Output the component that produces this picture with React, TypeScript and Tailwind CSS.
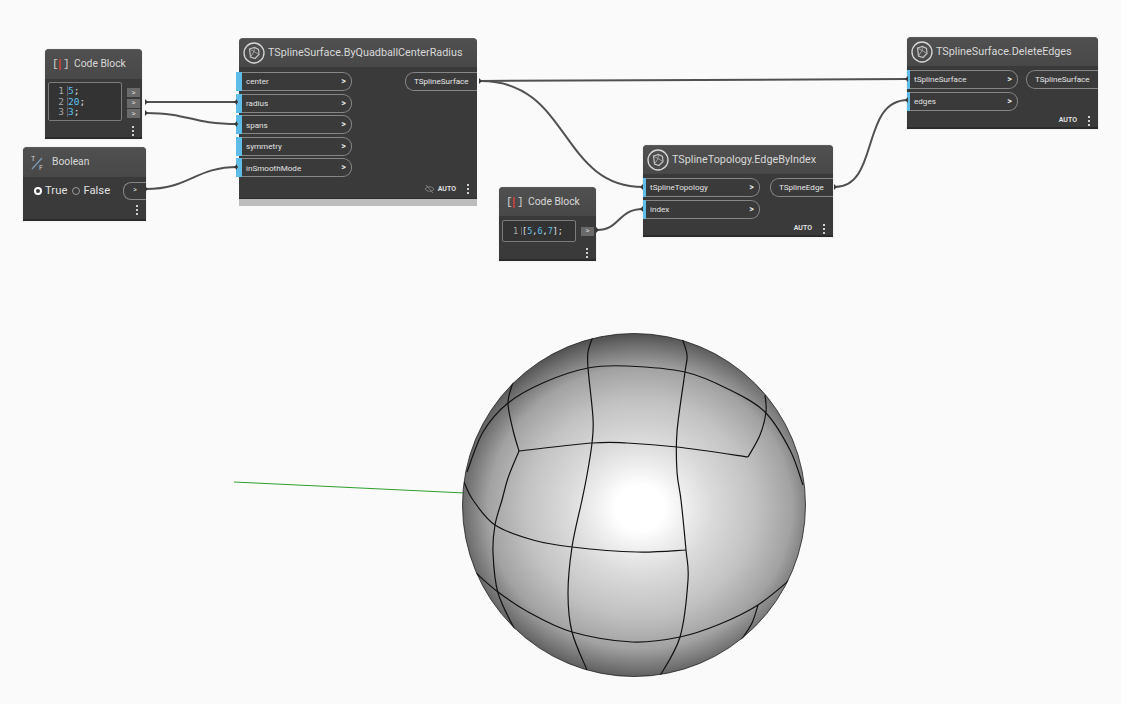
import React from "react";

const FONT = "font-['Roboto','Noto_Sans',sans-serif]";

function smooth(pts: number[][], t = 0.5): string {
  let d = `M${pts[0][0]} ${pts[0][1]}`;
  for (let i = 0; i < pts.length - 1; i++) {
    const p0 = pts[Math.max(0, i - 1)], p1 = pts[i], p2 = pts[i + 1], p3 = pts[Math.min(pts.length - 1, i + 2)];
    const c1x = p1[0] + ((p2[0] - p0[0]) * t) / 3, c1y = p1[1] + ((p2[1] - p0[1]) * t) / 3;
    const c2x = p2[0] - ((p3[0] - p1[0]) * t) / 3, c2y = p2[1] - ((p3[1] - p1[1]) * t) / 3;
    d += ` C${c1x.toFixed(1)} ${c1y.toFixed(1)} ${c2x.toFixed(1)} ${c2y.toFixed(1)} ${p2[0]} ${p2[1]}`;
  }
  return d;
}

const curves: number[][][] = [
  [[467,472],[483,432],[508,403],[545,382],[588,368],[627,366],[685,372],[728,389],[765,412],[790,450],[803,485]],
  [[519,451],[592,443],[627,443],[677,447],[748,457]],
  [[748,457],[760,435],[766,412],[765,395]],
  [[519,451],[513,430],[508,403],[513,382]],
  [[519,451],[508,478],[502,500],[495,525],[493,553],[498,593],[516,632]],
  [[593,336],[588,352],[588,368],[593,418],[592,443],[587,475],[582,500],[572,547],[568,593],[572,632],[587,670]],
  [[682,338],[687,355],[685,372],[677,432],[677,472],[681,500],[686,550],[688,580],[680,637],[660,676]],
  [[464,482],[473,500],[495,525],[533,540],[572,547],[637,552],[686,550]],
  [[476,573],[498,592],[530,613],[572,632],[632,642],[680,637],[720,624],[758,605],[792,578]],
  [[758,605],[752,623],[740,642]],
];

function Sphere() {
  return (
    <svg className="absolute left-0 top-0" width="1121" height="704" viewBox="0 0 1121 704" fill="none">
      <defs>
        <radialGradient id="ball" gradientUnits="userSpaceOnUse" cx="0" cy="0" r="1" gradientTransform="translate(640 508) scale(192 178)">
          <stop offset="0" stopColor="#ffffff" />
          <stop offset="0.13" stopColor="#ffffff" />
          <stop offset="0.24" stopColor="#eeeeee" />
          <stop offset="0.38" stopColor="#dadada" />
          <stop offset="0.6" stopColor="#c2c2c2" />
          <stop offset="0.79" stopColor="#a2a2a2" />
          <stop offset="0.92" stopColor="#6c6c6c" />
          <stop offset="1" stopColor="#484848" />
        </radialGradient>
        <clipPath id="ballClip">
          <circle cx="634" cy="505" r="172" />
        </clipPath>
      </defs>
      <path d="M234 482 L465 493" stroke="#2f9e2f" strokeWidth="1" />
      <circle cx="634" cy="505" r="171.5" fill="url(#ball)" stroke="#222" strokeWidth="0.8" />
      <g clipPath="url(#ballClip)">
        {curves.map((c, i) => (
          <path key={i} d={smooth(c)} stroke="#111" strokeWidth="1.2" />
        ))}
      </g>
    </svg>
  );
}

function Wires() {
  const w = "#505050";
  const paths = [
    "M146 102 L238 102",
    "M146 113 C190 113 190 124 238 124",
    "M146 189 C190 189 195 167 238 167",
    "M481 81 L908 79",
    "M481 81 C570 81 560 187 643 187",
    "M597 230 C620 230 618 209 643 209",
    "M835 187 C880 187 860 100 908 100",
  ];
  const nubs = [[146,102],[146,113],[146,189],[480,81],[597,230],[835,187]];
  const inNubs = [[236,102],[236,124],[236,167],[642,187],[642,209],[907,79],[907,100]];
  return (
    <svg className="absolute left-0 top-0 z-20 pointer-events-none" width="1121" height="704" viewBox="0 0 1121 704" fill="none">
      {paths.map((d, i) => (
        <path key={i} d={d} stroke={w} strokeWidth="2" />
      ))}
      {nubs.map(([x, y], i) => (
        <path key={i} d={`M${x - 1} ${y - 3} L${x + 2} ${y} L${x - 1} ${y + 3} Z`} fill="#3a3a3a" />
      ))}
      {inNubs.map(([x, y], i) => (
        <path key={i} d={`M${x + 1} ${y - 3} L${x - 2} ${y} L${x + 1} ${y + 3} Z`} fill="#3a3a3a" />
      ))}
    </svg>
  );
}

function NodeIcon() {
  return (
    <svg width="22" height="22" viewBox="0 0 22 22" fill="none" className="shrink-0">
      <circle cx="11" cy="11" r="10" stroke="#d8d8d8" strokeWidth="1.3" />
      <path d="M6.5 7 L11.5 5.5 L15.5 7.5 L16 12.5 L12 16.5 L7.5 15 Z" stroke="#c4c4c4" strokeWidth="1.2" />
      <path d="M6.5 7 L11 9.5 L11.5 5.5 M11 9.5 L16 12.5 M11 9.5 L7.5 15" stroke="#a8a8a8" strokeWidth="0.9" />
    </svg>
  );
}

function CodeIcon() {
  return (
    <span className="flex w-[15px] items-center justify-between font-['Liberation_Mono',monospace] text-[11px] leading-none text-[#cfcfcf]">
      <span className="w-[4px] shrink-0">[</span>
      <span className="h-[11px] w-[2px] shrink-0 bg-[#b5423f]" />
      <span className="w-[4px] shrink-0 text-right">]</span>
    </span>
  );
}

function BoolIcon() {
  return (
    <svg width="14" height="16" viewBox="0 0 14 16" fill="none">
      <path d="M1 14 L11 3" stroke="#7c9ab8" strokeWidth="1.2" />
      <text x="0" y="6" fontSize="7" fill="#cfcfcf" fontFamily="Roboto, sans-serif">T</text>
      <text x="8" y="15" fontSize="7" fill="#cfcfcf" fontFamily="Roboto, sans-serif">F</text>
    </svg>
  );
}

function Dots({ className = "" }: { className?: string }) {
  return (
    <span className={"flex h-[10px] w-[2px] flex-col justify-between " + className}>
      <span className="h-[2px] w-[2px] bg-[#d0d0d0]" />
      <span className="h-[2px] w-[2px] bg-[#d0d0d0]" />
      <span className="h-[2px] w-[2px] bg-[#d0d0d0]" />
    </span>
  );
}

function Auto({ hidden }: { hidden?: boolean }) {
  return (
    <div className="flex h-[14px] items-center justify-end pr-[8px]">
      {hidden && (
        <svg width="11" height="10" viewBox="0 0 11 10" fill="none" className="mr-[3px]">
          <path d="M1 5 C3 2 8 2 10 5 C8 8 3 8 1 5 Z M2 1 L9 9" stroke="#8a8a8a" strokeWidth="0.8" />
        </svg>
      )}
      <span className="mr-[11px] text-[7px] font-semibold leading-none text-[#e4e4e4]">AUTO</span>
      <Dots />
    </div>
  );
}

function InPort({ name, wide }: { name: string; wide?: boolean }) {
  return (
    <div className={"relative flex h-[19px] items-center rounded-r-[9px] border border-l-0 border-[#868686] pr-[5px] " + (wide ? "ml-[2px] pl-[5px]" : "pl-[7px]")}>
      <span className={"absolute top-[-1px] h-[19px] bg-[#5dbde6] " + (wide ? "left-[-5px] w-[6px]" : "left-0 w-[3px]")} />
      <span className="flex-1 text-[8.1px] leading-none text-[#e2e2e2]">{name}</span>
      <span className="text-[9px] font-semibold leading-none text-[#e8e8e8]">&gt;</span>
    </div>
  );
}

function OutPort({ name }: { name: string }) {
  return (
    <div className="flex h-[19px] items-center rounded-l-[9px] border border-r-0 border-[#868686] pl-[8px]">
      <span className="text-[8.1px] leading-none text-[#e8e8e8]">{name}</span>
    </div>
  );
}

function Header({ title, icon, h, gap, pad, small }: { title: string; icon: React.ReactNode; h: string; gap: string; pad: string; small?: boolean }) {
  return (
    <div className={`flex items-center rounded-t-[4px] bg-gradient-to-b from-[#505050] to-[#484848] ${h} ${gap} ${pad}`}>
      {icon}
      <span className={"whitespace-nowrap leading-none text-[#d8d8d8] " + (small ? "text-[10.3px]" : "text-[10.8px]")}>{title}</span>
    </div>
  );
}

function CodeLine({ n, children, small }: { n: number; children: React.ReactNode; small?: boolean }) {
  return (
    <div className={"flex h-[10.5px] items-center font-['DejaVu_Sans_Mono','Liberation_Mono',monospace] leading-none " + (small ? "text-[8.5px]" : "text-[9.5px]")}>
      <span className="w-[18px] pr-[3px] text-right text-[#a8a8a8]">{n}</span>
      <span className="border-l border-[#666] text-[#e0e0e0]">{children}</span>
    </div>
  );
}

const B = ({ children }: { children: React.ReactNode }) => <span className="text-[#5cc0ee]">{children}</span>;

function OutChip() {
  return (
    <span className="flex h-[9px] w-[13px] items-center justify-center bg-[#6a6a6a] text-[8px] leading-none text-[#dcdcdc]">&gt;</span>
  );
}

const nodeBase = "absolute z-10 bg-[#3a3a3a] border-t border-[#5c5c5c] border-b-2 border-b-[#2b2b2b] rounded-t-[4px] shadow-[0_0_1px_rgba(0,0,0,0.35)]";

export default function App() {
  return (
    <div className={`relative h-[704px] w-[1121px] overflow-hidden bg-[#fafafa] ${FONT}`}>
      <Sphere />
      <Wires />

      {/* Code Block 1 */}
      <div className={`${nodeBase} left-[45px] top-[49px] h-[90px] w-[97px]`}>
        <Header small title="Code Block" icon={<CodeIcon />} h="h-[29px]" gap="gap-[7px]" pad="pl-[7px]" />
        <div className="flex pl-[3px] pt-[3px]">
          <div className="flex h-[39px] w-[74px] flex-col justify-center rounded-[2px] border border-[#7c7c7c] bg-[#333333]">
            <CodeLine n={1}><B>5</B>;</CodeLine>
            <CodeLine n={2}><B>20</B>;</CodeLine>
            <CodeLine n={3}><B>3</B>;</CodeLine>
          </div>
          <div className="ml-[5px] flex flex-col gap-[1.5px] pt-[6px]">
            <OutChip />
            <OutChip />
            <OutChip />
          </div>
        </div>
        <div className="flex justify-end pr-[8px] pt-[5px]"><Dots /></div>
      </div>

      {/* Boolean */}
      <div className={`${nodeBase} left-[23px] top-[147px] h-[74px] w-[123px]`}>
        <Header small title="Boolean" icon={<BoolIcon />} h="h-[29px]" gap="gap-[7px]" pad="pl-[8px]" />
        <div className="flex items-center pl-[11px] pt-[4px]">
          <span className="h-[8px] w-[8px] rounded-full border-[2.5px] border-white" />
          <span className="ml-[3px] text-[11.3px] leading-[19px] text-[#e0e0e0]">True</span>
          <span className="ml-[5px] h-[8px] w-[8px] rounded-full border border-[#999]" />
          <span className="ml-[3px] text-[11.3px] leading-[19px] text-[#e0e0e0]">False</span>
          <div className="ml-auto flex h-[18px] w-[23px] items-center justify-center rounded-l-[8px] border border-r-0 border-[#868686] text-[7px] text-[#e0e0e0]">&gt;</div>
        </div>
        <div className="flex justify-end pr-[8px] pt-[5px]"><Dots /></div>
      </div>

      {/* ByQuadballCenterRadius */}
      <div className="absolute left-[239px] top-[38px] z-10 w-[238px]">
        <div className="rounded-t-[4px] border-t border-[#5c5c5c] bg-[#3a3a3a]">
          <Header title="TSplineSurface.ByQuadballCenterRadius" icon={<NodeIcon />} h="h-[28px]" gap="gap-[3px]" pad="pl-[4px]" />
          <div className="flex justify-between pt-[5px]">
            <div className="flex w-[113px] flex-col gap-[2.6px]">
              <InPort wide name="center" />
              <InPort wide name="radius" />
              <InPort wide name="spans" />
              <InPort wide name="symmetry" />
              <InPort wide name="inSmoothMode" />
            </div>
            <div className="w-[72px]"><OutPort name="TSplineSurface" /></div>
          </div>
          <div className="pb-[2px] pt-[5px]"><Auto hidden /></div>
        </div>
        <div className="h-[8px] border-t border-[#2b2b2b] bg-[#bdbdbd]" />
      </div>

      {/* Code Block 2 */}
      <div className={`${nodeBase} left-[499px] top-[187px] h-[74px] w-[97px]`}>
        <Header small title="Code Block" icon={<CodeIcon />} h="h-[28px]" gap="gap-[7px]" pad="pl-[7px]" />
        <div className="flex items-center pl-[3px] pt-[4px]">
          <div className="flex h-[22px] w-[74px] items-center rounded-[2px] border border-[#7c7c7c] bg-[#333333]">
            <CodeLine small n={1}>[<B>5</B>,<B>6</B>,<B>7</B>];</CodeLine>
          </div>
          <div className="ml-[5px]"><OutChip /></div>
        </div>
        <div className="flex justify-end pr-[8px] pt-[6px]"><Dots /></div>
      </div>

      {/* EdgeByIndex */}
      <div className={`${nodeBase} left-[643px] top-[145px] h-[92px] w-[190px]`}>
        <Header title="TSplineTopology.EdgeByIndex" icon={<NodeIcon />} h="h-[28px]" gap="gap-[3px]" pad="pl-[4px]" />
        <div className="flex justify-between pt-[4px]">
          <div className="flex w-[117px] flex-col gap-[2.6px]">
            <InPort name="tSplineTopology" />
            <InPort name="index" />
          </div>
          <div className="w-[63px]"><OutPort name="TSplineEdge" /></div>
        </div>
        <div className="pt-[3px]"><Auto /></div>
      </div>

      {/* DeleteEdges */}
      <div className={`${nodeBase} left-[907px] top-[37px] h-[92px] w-[191px]`}>
        <Header title="TSplineSurface.DeleteEdges" icon={<NodeIcon />} h="h-[28px]" gap="gap-[3px]" pad="pl-[4px]" />
        <div className="flex justify-between pt-[4px]">
          <div className="flex w-[111px] flex-col gap-[2.6px]">
            <InPort name="tSplineSurface" />
            <InPort name="edges" />
          </div>
          <div className="w-[72px]"><OutPort name="TSplineSurface" /></div>
        </div>
        <div className="pt-[3px]"><Auto /></div>
      </div>
    </div>
  );
}
